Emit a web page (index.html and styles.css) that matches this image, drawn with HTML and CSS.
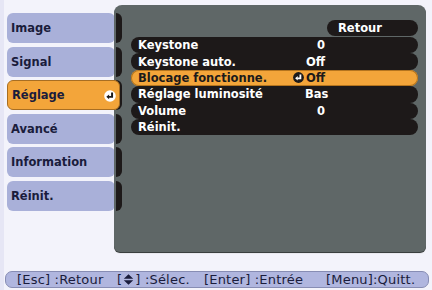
FILE: index.html
```html
<!DOCTYPE html>
<html lang="fr">
<head>
  <meta charset="UTF-8">
  <title>Menu Réglage</title>
  <link rel="stylesheet" href="styles.css">
</head>
<body>

  <div class="osd">
    <div class="top">

      <!-- Onglets -->
      <div class="tabs">
        <div class="tab">Image</div>
        <div class="tab">Signal</div>
        <div class="tab active">Réglage
          <svg class="enter-ico" width="12" height="12" viewBox="0 0 11 11">
            <circle cx="5.5" cy="5.5" r="5.3" fill="#ffffff"/>
            <path d="M7.4 2.4 V6.3 H4.2" fill="none" stroke="#1c1a1a" stroke-width="1.8"/>
            <path d="M2.1 6.3 L4.7 4.1 V8.5 Z" fill="#1c1a1a"/>
          </svg>
        </div>
        <div class="tab">Avancé</div>
        <div class="tab">Information</div>
        <div class="tab">Réinit.</div>
      </div>

      <!-- Panneau -->
      <div class="panel">
        <div class="strip">
          <span></span><span></span><span></span><span></span><span></span><span></span>
        </div>
        <div class="content">
          <div class="back">Retour</div>
          <div class="rows">
            <div class="row"><span>Keystone</span><span></span><span class="val">0</span></div>
            <div class="row"><span>Keystone auto.</span><span></span><span class="val">Off</span></div>
            <div class="row sel"><span>Blocage fonctionne.</span>
              <svg class="row-ico" width="11" height="11" viewBox="0 0 11 11">
                <circle cx="5.5" cy="5.5" r="5.4" fill="#1c1a1a"/>
                <path d="M7.4 2.4 V6.3 H4.2" fill="none" stroke="#ffffff" stroke-width="1.8"/>
                <path d="M2.1 6.3 L4.7 4.1 V8.5 Z" fill="#ffffff"/>
              </svg>
              <span class="val">Off</span></div>
            <div class="row"><span>Réglage luminosité</span><span></span><span class="val">Bas</span></div>
            <div class="row"><span>Volume</span><span></span><span class="val">0</span></div>
            <div class="row"><span>Réinit.</span><span></span><span></span></div>
          </div>
        </div>
      </div>
    </div>

    <!-- Barre d'aide -->
    <div class="help">
      <span class="h1">[Esc] :Retour</span>
      <span class="h2">[<svg class="updown" width="11" height="11" viewBox="0 0 10 10"><path d="M5 0.3 L9.3 4.4 H0.7 Z M5 9.7 L9.3 5.6 H0.7 Z" fill="#1a1c3c"/></svg>] :Sélec.</span>
      <span class="h3">[Enter] :Entrée</span>
      <span class="h4">[Menu]:Quitt.</span>
    </div>
  </div>

</body>
</html>
```

FILE: styles.css
```css
* {
  box-sizing: border-box;
  margin: 0;
  padding: 0;
}
body {
  width: 432px;
  height: 290px;
  background: #f3f3fb;
  font-family: "DejaVu Sans", Verdana, sans-serif;
  overflow: hidden;
}
.osd { padding-top: 5px; border-left: 4px solid #e6e6f5; height: 290px; }
.top { display: flex; align-items: flex-start; }

/* onglets gauche */
.tabs { width: 108px; margin-left: 3px; padding-top: 8px; display: flex; flex-direction: column; }
.tab {
  height: 30px;
  margin-bottom: 3.6px;
  background: #a9b0d9;
  border-radius: 6px;
  color: #1a1c3c;
  font-size: 11.5px;
  font-weight: bold;
  display: flex;
  align-items: center;
  justify-content: space-between;
  padding: 0 4px 0 4px;
}
.tab.active {
  position: relative;
  z-index: 2;
  width: 113px;
  background: #f3a53a;
  border: 1px solid #a86e22;
  padding-right: 3px;
}
.enter-ico { margin-top: 2px; }

/* panneau gris */
.panel {
  width: 312px;
  height: 247px;
  margin-left: -1px;
  background: #5f6767;
  border-radius: 8px 8px 6px 6px;
  box-shadow: 0 1px 0 #3a3f3f, 0 2px 0 #e8e8ee;
  display: flex;
}
.strip { width: 6px; margin-left: 2px; padding-top: 8px; display: flex; flex-direction: column; }
.strip span { height: 30px; margin-bottom: 3.6px; background: #1d1919; border-radius: 0 6px 6px 0; }
.content { flex: 1; padding: 15px 8px 0 9px; }

.back {
  width: 91px;
  height: 16px;
  margin-left: auto;
  margin-bottom: 1px;
  background: #1d1919;
  border-radius: 8px;
  color: #ffffff;
  font-size: 11.5px;
  font-weight: bold;
  line-height: 16px;
  padding-left: 11px;
}
.rows { display: flex; flex-direction: column; }
.row {
  height: 16.4px;
  background: #1d1919;
  border-radius: 8px;
  color: #ffffff;
  font-size: 11.5px;
  font-weight: bold;
  display: grid;
  grid-template-columns: 155px 12px 20px 1fr;
  align-items: center;
  padding-left: 7px;
  white-space: nowrap;
}
.row .val { text-align: right; }
.row.sel { background: #f3a53a; color: #1c1a1a; box-shadow: inset 0 0 0 1px #b4741e; }
.row-ico { display: block; }

/* barre d'aide */
.help {
  margin: 19px 3px 0 1px;
  height: 17px;
  background: #b0b6df;
  border: 1px solid #878db4;
  border-radius: 7px;
  color: #1a1c3c;
  font-size: 13px;
  letter-spacing: 0.2px;
  display: flex;
  align-items: center;
  padding-left: 11px;
  white-space: nowrap;
}
.help span { display: inline-block; }
.h1 { width: 100px; }
.h2 { width: 87px; }
.h3 { width: 122px; }
.updown { vertical-align: -1px; margin: 0 1px; }
```
